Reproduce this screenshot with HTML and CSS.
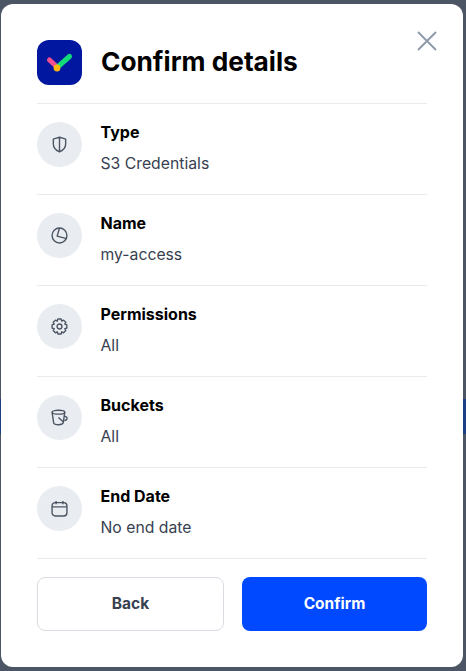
FILE: index.html
```html
<!DOCTYPE html>
<html lang="en">
<head>
  <meta charset="UTF-8" />
  <title>Confirm details</title>
  <link rel="stylesheet" href="styles.css">
</head>
<body>
  <div class="modal">
    <button class="close" title="Close">
      <svg width="20" height="20" viewBox="0 0 20 20" fill="none" stroke="#8f9bab" stroke-width="2"><path d="M1 1l18 18M19 1L1 19"/></svg>
    </button>

    <header class="modal-head">
      <div class="logo">
        <svg width="45" height="45" viewBox="0 0 45 45" fill="none" stroke-width="5" stroke-linecap="round">
          <path d="M12.500 20l7.500 7" stroke="#f0508f"/>
          <path d="M20 27.500l12.500-11" stroke="#12dc78"/>
          <circle cx="20" cy="28" r="3.400" fill="#fdb90f" stroke="none"/>
        </svg>
      </div>
      <h1>Confirm details</h1>
    </header>

    <div class="row">
      <div class="row-icon">
        <svg width="17" height="17" viewBox="0 0 16 16"><path d="M8 1l5.800 2v4.500c0 3.300-2.400 5.900-5.800 7.500-3.400-1.600-5.800-4.200-5.800-7.500V3L8 1zM8 1v14"/></svg>
      </div>
      <div>
        <div class="row-label">Type</div>
        <div class="row-value">S3 Credentials</div>
      </div>
    </div>

    <div class="row">
      <div class="row-icon">
        <svg width="17" height="17" viewBox="0 0 16 16"><circle cx="8" cy="8" r="7"/><path d="M8 1L5.800 8.600l8.800 2.400"/></svg>
      </div>
      <div>
        <div class="row-label">Name</div>
        <div class="row-value">my-access</div>
      </div>
    </div>

    <div class="row">
      <div class="row-icon">
        <svg width="17" height="17" viewBox="0 0 16 16"><circle cx="8" cy="8" r="2.300"/><path d="M6.500 1h3l.6 1.900 1.700-.9 2.100 2.100-.9 1.700 1.900.7v3l-1.900.6.900 1.700-2.100 2.100-1.700-.9-.6 2H6.500l-.6-2-1.700.9-2.100-2.100.9-1.700L1 9.500v-3l2-.7-.9-1.700L4.200 2l1.700.9.600-1.900z"/></svg>
      </div>
      <div>
        <div class="row-label">Permissions</div>
        <div class="row-value">All</div>
      </div>
    </div>

    <div class="row">
      <div class="row-icon">
        <svg width="17" height="17" viewBox="0 0 16 16"><ellipse cx="7" cy="3" rx="6" ry="1.800"/><path d="M1 3l1.500 10c.2 1 2 1.800 4.500 1.800s4.200-.8 4.500-1.800L13 3M7 8l4.500 4M12.500 7c1.500-.4 3 .8 2.500 2.400-.3.900-1.200 1.400-2.300 1.400"/></svg>
      </div>
      <div>
        <div class="row-label">Buckets</div>
        <div class="row-value">All</div>
      </div>
    </div>

    <div class="row">
      <div class="row-icon">
        <svg width="17" height="17" viewBox="0 0 16 16"><rect x="1" y="2.500" width="14" height="12.500" rx="3"/><path d="M1 6.500h14M4.800 1v3M11.200 1v3"/></svg>
      </div>
      <div>
        <div class="row-label">End Date</div>
        <div class="row-value">No end date</div>
      </div>
    </div>

    <footer class="actions">
      <button class="btn btn-back">Back</button>
      <button class="btn btn-confirm">Confirm</button>
    </footer>
  </div>
</body>
</html>
```

FILE: styles.css
```css
* {
  box-sizing: border-box;
}

html, body {
  height: 100%;
}

body {
  margin: 0;
  padding: 4px 3px 4px 1px;
  font-family: Inter, 'Liberation Sans', sans-serif;
  background: linear-gradient(to bottom, #4c5564 0, #4c5564 399px, #1c3f86 399px, #1c3f86 434px, #4c5564 434px);
  overflow: hidden;
}

.modal {
  position: relative;
  height: 663px;
  padding: 36px 36px 0;
  background: #fff;
  border-radius: 12px;
}

.close {
  position: absolute;
  top: 27px;
  right: 26px;
  padding: 0;
  height: 20px;
  background: none;
  border: none;
  cursor: pointer;
}

.modal-head {
  display: flex;
  align-items: center;
  gap: 19px;
  height: 64px;
  padding-bottom: 19px;
  border-bottom: 1px solid #e9ebee;
}

.logo {
  width: 45px;
  height: 45px;
  border-radius: 12px;
  background: #02179f;
}

h1 {
  margin: 0;
  font-size: 26.250px;
  line-height: 32px;
  font-weight: 700;
  color: #000;
}

.row {
  display: flex;
  gap: 18.500px;
  height: 91px;
  padding-top: 18px;
  border-bottom: 1px solid #e9ebee;
}

.row-icon {
  display: flex;
  align-items: center;
  justify-content: center;
  width: 45px;
  height: 45px;
  border-radius: 50%;
  background: #e9ecf0;
}

.row-icon svg {
  fill: none;
  stroke: #4b5563;
  stroke-width: 1.300;
  stroke-linejoin: round;
}

.row-label {
  margin-top: -1px;
  font-size: 16px;
  line-height: 22px;
  font-weight: 700;
  color: #000;
}

.row-value {
  margin-top: 10px;
  font-size: 15.750px;
  line-height: 22px;
  color: #374151;
}

.actions {
  display: grid;
  grid-template-columns: 187px 185px;
  gap: 18px;
  margin-top: 18px;
}

.btn {
  height: 54px;
  padding: 0 0 1px;
  border-radius: 8px;
  font-family: inherit;
  font-size: 15.500px;
  font-weight: 700;
  cursor: pointer;
}

.btn-back {
  background: #fff;
  color: #374151;
  border: 1px solid #d9dde3;
}

.btn-confirm {
  background: #0049ff;
  color: #fff;
  border: none;
}
```
